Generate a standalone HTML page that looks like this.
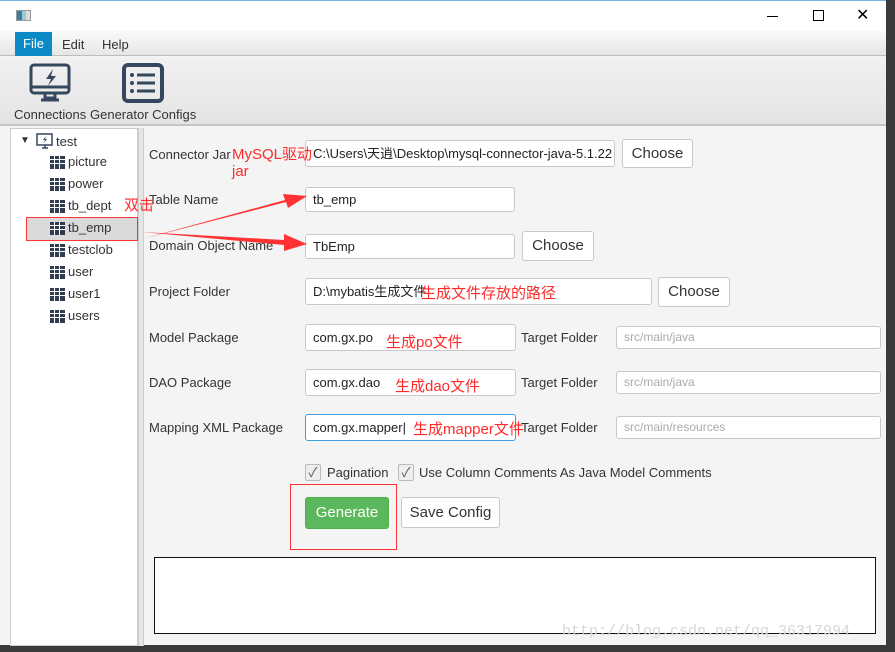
<!DOCTYPE html>
<html><head><meta charset="utf-8"><style>
*{box-sizing:border-box;margin:0;padding:0}
body{width:895px;height:652px;overflow:hidden;background:#3a3a3a;font-family:"Liberation Sans","Noto Sans CJK SC",sans-serif;font-size:13px;color:#333;position:relative}
.a{position:absolute}
.win{left:0;top:0;width:886px;height:645px;background:#f4f4f4;border-top:1px solid #6fb3e8}
.inp{position:absolute;background:#fff;border:1px solid #c8c8c8;border-radius:3px;height:27px;line-height:25px;padding-left:7px;font-size:13px;color:#222;white-space:nowrap;overflow:hidden}
.btn{position:absolute;background:#fff;border:1px solid #c8c8c8;border-radius:3px;font-size:15px;color:#333;text-align:center}
.lbl{position:absolute;font-size:13px;color:#333}
.red{position:absolute;color:#ff2a2a;font-size:15px;white-space:nowrap}
.ph{color:#aaa}
.tree div{position:absolute;left:52px;font-size:13px;color:#333}
.ti{position:absolute;left:48px;width:15px;height:13px;background:#2f3d4e;
 background-image:linear-gradient(90deg,transparent 4px,#fff 4px,#fff 5px,transparent 5px,transparent 9px,#fff 9px,#fff 10px,transparent 10px),linear-gradient(transparent 3px,#fff 3px,#fff 4px,transparent 4px,transparent 7px,#fff 7px,#fff 8px,transparent 8px)}
.cb{position:absolute;width:16px;height:17px;border:1px solid #bbb;border-radius:2px;background:#eee;font-size:13px;line-height:15px;text-align:center;color:#555}
</style></head><body>
<div class="a win">
 <div class="a" style="left:0;top:0;width:886px;height:30px;background:#fff"></div>
 <div class="a" style="left:16px;top:9px;width:15px;height:11px;border:1px solid #999;background:linear-gradient(90deg,#3a7ca5 40%,#9cc 40%,#9cc 70%,#ddd 70%)"></div>
 <div class="a" style="left:767px;top:15px;width:11px;height:1px;background:#000"></div>
 <div class="a" style="left:813px;top:9px;width:11px;height:11px;border:1px solid #000"></div>
 <div class="a" style="left:856px;top:8px;font-size:16px;color:#000;line-height:14px">✕</div>
 <div class="a" style="left:0;top:30px;width:886px;height:25px;background:linear-gradient(#fafafa,#e6e6e6);border-bottom:1px solid #bdbdbd"></div>
 <div class="a" style="left:15px;top:31px;width:37px;height:24px;background:#0c8ac6;color:#fff;line-height:24px;text-align:center">File</div>
 <div class="a" style="left:62px;top:36px">Edit</div>
 <div class="a" style="left:102px;top:36px">Help</div>
 <div class="a" style="left:0;top:56px;width:886px;height:69px;background:linear-gradient(#f1f1f1,#e4e4e4);border-bottom:2px solid #c4c4c4"></div>
 <svg class="a" style="left:28px;top:62px" width="46" height="40" viewBox="0 0 46 40"><rect x="3" y="2" width="38" height="28" rx="3" fill="none" stroke="#34475c" stroke-width="3"/><path d="M3 24h38" stroke="#34475c" stroke-width="3"/><path d="M17 30v5h10v-5M13 37h18" stroke="#34475c" stroke-width="3" fill="none"/><path d="M25 6l-7 10h5l-3 7 8-10h-5z" fill="#34475c"/></svg>
 <svg class="a" style="left:122px;top:62px" width="42" height="40" viewBox="0 0 42 40"><rect x="2" y="2" width="38" height="36" rx="4" fill="none" stroke="#34475c" stroke-width="4"/><g fill="#34475c"><circle cx="10" cy="12" r="2"/><circle cx="10" cy="20" r="2"/><circle cx="10" cy="28" r="2"/><rect x="15" y="10.5" width="18" height="3"/><rect x="15" y="18.5" width="18" height="3"/><rect x="15" y="26.5" width="18" height="3"/></g></svg>
 <div class="a" style="left:14px;top:106px">Connections</div>
 <div class="a" style="left:90px;top:106px">Generator Configs</div>
 <div class="a tree" style="left:10px;top:127px;width:128px;height:518px;background:#fff;border:1px solid #ccc">
  <div style="left:9px;top:6px;font-size:10px">▼</div>
  <svg class="a" style="left:25px;top:4px" width="18" height="17"><rect x="1" y="1" width="15" height="11" fill="none" stroke="#34475c" stroke-width="1.5"/><path d="M6 15h6M9 12v3" stroke="#34475c" stroke-width="1.5"/><path d="M10 3l-3 4h2l-1 3 3-4h-2z" fill="#34475c"/></svg>
  <div style="left:45px;top:5px">test</div>
  <div class="a" style="left:16px;top:89px;width:111px;height:22px;background:#dadada"></div>
 </div>
 <div class="a tree" style="left:10px;top:127px">
  <span class="ti" style="left:40px;top:28px"></span><div style="left:58px;top:26px">picture</div>
  <span class="ti" style="left:40px;top:50px"></span><div style="left:58px;top:48px">power</div>
  <span class="ti" style="left:40px;top:72px"></span><div style="left:58px;top:70px">tb_dept</div>
  <span class="ti" style="left:40px;top:94px"></span><div style="left:58px;top:92px">tb_emp</div>
  <span class="ti" style="left:40px;top:116px"></span><div style="left:58px;top:114px">testclob</div>
  <span class="ti" style="left:40px;top:138px"></span><div style="left:58px;top:136px">user</div>
  <span class="ti" style="left:40px;top:160px"></span><div style="left:58px;top:158px">user1</div>
  <span class="ti" style="left:40px;top:182px"></span><div style="left:58px;top:180px">users</div>
 </div>
 <div class="a" style="left:26px;top:216px;width:112px;height:24px;border:1px solid #f33"></div>
 <div class="a" style="left:138px;top:127px;width:6px;height:518px;background:#e6e6e6;border-left:1px solid #ccc;border-right:1px solid #ccc"></div>

 <div class="lbl" style="left:149px;top:146px">Connector Jar</div>
 <div class="inp" style="left:305px;top:139px;width:310px">C:\Users\天逍\Desktop\mysql-connector-java-5.1.22</div>
 <div class="btn" style="left:622px;top:138px;width:71px;height:29px;line-height:27px">Choose</div>
 <div class="lbl" style="left:149px;top:191px">Table Name</div>
 <div class="inp" style="left:305px;top:186px;width:210px;height:25px;line-height:23px">tb_emp</div>
 <div class="lbl" style="left:149px;top:237px">Domain Object Name</div>
 <div class="inp" style="left:305px;top:233px;width:210px;height:25px;line-height:23px">TbEmp</div>
 <div class="btn" style="left:522px;top:230px;width:72px;height:30px;line-height:28px">Choose</div>
 <div class="lbl" style="left:149px;top:283px">Project Folder</div>
 <div class="inp" style="left:305px;top:277px;width:347px">D:\mybatis生成文件</div>
 <div class="btn" style="left:658px;top:276px;width:72px;height:30px;line-height:28px">Choose</div>
 <div class="lbl" style="left:149px;top:329px">Model Package</div>
 <div class="inp" style="left:305px;top:323px;width:211px">com.gx.po</div>
 <div class="lbl" style="left:521px;top:329px">Target Folder</div>
 <div class="inp ph" style="left:616px;top:325px;width:265px;height:23px;line-height:21px;font-size:12px">src/main/java</div>
 <div class="lbl" style="left:149px;top:374px">DAO Package</div>
 <div class="inp" style="left:305px;top:368px;width:211px">com.gx.dao</div>
 <div class="lbl" style="left:521px;top:374px">Target Folder</div>
 <div class="inp ph" style="left:616px;top:370px;width:265px;height:23px;line-height:21px;font-size:12px">src/main/java</div>
 <div class="lbl" style="left:149px;top:419px">Mapping XML Package</div>
 <div class="inp" style="left:305px;top:413px;width:211px;border:1px solid #3fa0e0">com.gx.mapper|</div>
 <div class="lbl" style="left:521px;top:419px">Target Folder</div>
 <div class="inp ph" style="left:616px;top:415px;width:265px;height:23px;line-height:21px;font-size:12px">src/main/resources</div>
 <div class="cb" style="left:305px;top:463px">✓</div><div class="lbl" style="left:327px;top:464px">Pagination</div>
 <div class="cb" style="left:398px;top:463px">✓</div><div class="lbl" style="left:419px;top:464px">Use Column Comments As Java Model Comments</div>
 <div class="btn" style="left:305px;top:496px;width:84px;height:32px;line-height:30px;background:#5cb85c;border-color:#4cae4c;color:#fff">Generate</div>
 <div class="btn" style="left:401px;top:496px;width:99px;height:31px;line-height:29px">Save Config</div>
 <div class="a" style="left:290px;top:483px;width:107px;height:66px;border:1px solid #f33"></div>
 <div class="a" style="left:154px;top:556px;width:722px;height:77px;background:#fff;border:1px solid #111"></div>

 <div class="red" style="left:232px;top:142px">MySQL驱动</div>
 <div class="red" style="left:232px;top:162px">jar</div>
 <div class="red" style="left:124px;top:193px">双击</div>
 <div class="red" style="left:421px;top:281px">生成文件存放的路径</div>
 <div class="red" style="left:386px;top:330px">生成po文件</div>
 <div class="red" style="left:395px;top:374px">生成dao文件</div>
 <div class="red" style="left:413px;top:417px">生成mapper文件</div>
 <svg class="a" style="left:0;top:0" width="886" height="645"><polygon points="142,238 285,199 283,193 307,195 288,207 286,201" fill="#ff3333"/><polygon points="142,231 284,239 284,233 307,243 284,250 284,244" fill="#ff3333"/></svg>
 <div class="a" style="left:562px;top:622px;color:#d6d6d6;font-family:'Liberation Mono',monospace;font-size:15px">http://blog.csdn.net/qq_36317994</div>
</div>
</body></html>
